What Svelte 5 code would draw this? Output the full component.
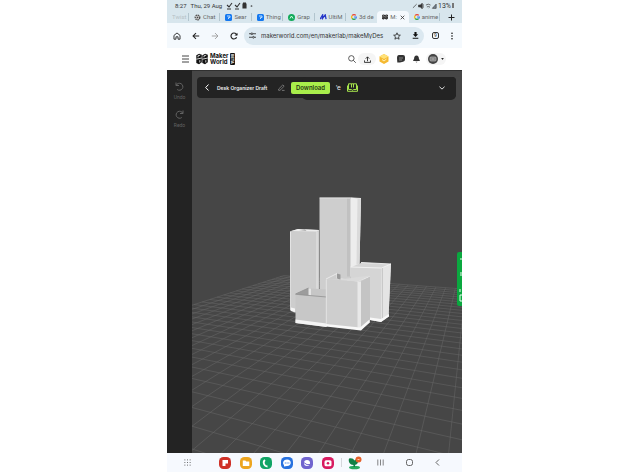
<script>
  const tabs = [
    { label: 'Twist', icon: '' },
    { label: 'Chat', icon: 'gear' },
    { label: 'Sear', icon: 'blue' },
    { label: 'Thing', icon: 'blue' },
    { label: 'Grap', icon: 'green' },
    { label: 'UltiM', icon: 'm' },
    { label: '3d de', icon: 'g' },
    { label: 'M:', icon: 'maker', active: true },
    { label: 'anime', icon: 'g' }
  ];
  const apps = [
    ['Flipboard', '#cf3128'],
    ['My Files', '#eda51f'],
    ['Phone', '#10a465'],
    ['Messages', '#2771df'],
    ['Internet', '#7064cf'],
    ['Camera', '#d81b60']
  ];

  // Floor grid in two-point perspective
  const va = { x: 473, y: 214 };
  const vb = { x: -530, y: 214 };
  const baseY = 452;
  const cross = (p, q, r, s) => {
    const d = (p.x - q.x) * (r.y - s.y) - (p.y - q.y) * (r.x - s.x);
    const a = p.x * q.y - p.y * q.x;
    const b = r.x * s.y - r.y * s.x;
    return {
      x: (a * (r.x - s.x) - (p.x - q.x) * b) / d,
      y: (a * (r.y - s.y) - (p.y - q.y) * b) / d
    };
  };
  const aPoint = (n) => ({ x: 448.7 - n * 32.4, y: baseY });
  const bPoint = (k) => ({ x: 192, y: 214 + 1 / (0.004724 + k * 0.000458) });
  const farA = aPoint(22);
  const farB = bPoint(30);
  const lines = [];
  for (let n = 0; n <= 22; n++) {
    const p = aPoint(n);
    const far = cross(va, p, vb, farB);
    lines.push([far, { x: p.x + (p.x - far.x), y: p.y + (p.y - far.y) }]);
  }
  for (let k = -4; k <= 30; k++) {
    const p = bPoint(k);
    const start = cross(va, farA, vb, p);
    const slope = (p.y - vb.y) / (p.x - vb.x);
    lines.push([start, { x: 900, y: vb.y + slope * (900 - vb.x) }]);
  }
</script>

{#snippet google()}
  <svg viewBox="0 0 10 10" width="6" height="6"><g fill="none" stroke-width="2"><path d="M8 2.3A4 4 0 0 0 2 2.5" stroke="#ea4335"/><path d="M2 2.5a4 4 0 0 0 0 5" stroke="#fbbc05"/><path d="M2 7.5a4 4 0 0 0 5.5.5" stroke="#34a853"/><path d="M5 5h4a4 4 0 0 1-1.5 3" stroke="#4285f4"/></g></svg>
{/snippet}

{#snippet makerMark(size)}
  <svg viewBox="0 0 12 12" width={size} height={size}><path d="M.3 2.200 3.200.8l2.600 1v7.500l-2.800 1.900L.3 10zM6.300 2.200 9.200.8l2.600 1v7.500L9 11.200 6.300 10z" fill="#111"/><path d="M.3 6.200 5.800 5M6.300 6.200 11.800 5M2 4.300V2.800l2.200-.6M8 4.300V2.800l2.200-.6M3.800 7.200v2.300M9.800 7.200v2.300" fill="none" stroke="#fff" stroke-width=".8"/></svg>
{/snippet}

<div class="page">
  <div class="device">
    <div class="status">
      <span>8:27</span><span class="date">Thu, 29 Aug</span>
      <svg viewBox="0 0 28 8" width="28" height="8" fill="none" stroke="#333" stroke-width="1.1"><path d="M1 3l2 2 3-4M1 7h4M9 3l2 2 3-4M9 7h4"/><path d="M17 2h3v4h-3zM17 1h3" fill="#333"/><circle cx="25.500" cy="4" r=".3"/></svg>
      <span class="right">
        <svg viewBox="0 0 28 8" width="26" height="8" fill="none" stroke="#444" stroke-width=".8"><path d="M1 6l4-4"/><path d="M7 3h2l2-2v6L9 5H7zM12 2v4" fill="#333"/><path d="M15 3q2.500-2 5 0M16 5q2-1 3 0l-1 1"/><path d="M22 6.500h4V2z" fill="#789"/></svg>
        <span class="percent">13%</span><i class="battery"></i>
      </span>
    </div>

    <nav class="tabs" aria-label="Browser tabs">
      {#each tabs as tab}
        <button class="tab" class:active={tab.active}>
          {#if tab.icon === 'g'}{@render google()}
          {:else if tab.icon === 'maker'}{@render makerMark(6)}
          {:else if tab.icon === 'm'}<svg viewBox="0 0 8 7" width="7" height="6"><path d="M0 6 3 1v4l3-4 1 5M3 5l-1 1" fill="none" stroke="#2637c8" stroke-width="1.500"/></svg>
          {:else if tab.icon === 'blue'}<svg viewBox="0 0 7 7" width="7" height="7"><rect width="7" height="7" rx="1.500" fill="#1478f0"/><path d="M2 2h3v1.500H3.500V5" fill="none" stroke="#b9dcff"/></svg>
          {:else if tab.icon === 'green'}<svg viewBox="0 0 7 7" width="7" height="7"><circle cx="3.500" cy="3.500" r="3.500" fill="#12aa5a"/><path d="M2 4.500 3.500 2 5 4.500" fill="none" stroke="#d5ffe6"/></svg>
          {:else if tab.icon === 'gear'}<svg viewBox="0 0 7 7" width="7" height="7"><circle cx="3.500" cy="3.500" r="2.200" fill="#fff" stroke="#555" stroke-width="1.500" stroke-dasharray="1.400 .5"/><circle cx="3.500" cy="3.500" r="1" fill="#444"/></svg>{/if}
          <span class="label">{tab.label}</span>
          {#if tab.active}<svg class="close" viewBox="0 0 5 5" width="5" height="5"><path d="m.7.7 3.600 3.600m0-3.600L.7 4.300" stroke="#333" stroke-width=".8"/></svg>{/if}
        </button>
      {/each}
      <button class="new" aria-label="New tab"><svg viewBox="0 0 7 7" width="7" height="7"><path d="M3.500.5v6M.5 3.500h6" stroke="#222"/></svg></button>
    </nav>

    <div class="address">
      <button aria-label="Home"><svg viewBox="0 0 10 10" width="8" height="8"><path d="M1.200 4.300 5 1.200l3.800 3.100V9H6.300V6H3.700v3H1.200z" fill="none" stroke="#222" stroke-width="1.100"/></svg></button>
      <button aria-label="Back"><svg viewBox="0 0 10 10" width="8" height="8"><path d="M9 5H1.500M5 1.300 1.300 5 5 8.700" fill="none" stroke="#222" stroke-width="1.300"/></svg></button>
      <button aria-label="Forward"><svg viewBox="0 0 10 10" width="8" height="8"><path d="M1 5h7.500M5 1.300 8.700 5 5 8.700" fill="none" stroke="#999" stroke-width="1.100"/></svg></button>
      <button aria-label="Reload"><svg viewBox="0 0 10 10" width="8" height="8"><path d="M8.300 6.500A3.700 3.700 0 1 1 7.700 2.500L9 4" fill="none" stroke="#222" stroke-width="1.400"/><path d="M9.300.8v3.700H5.600z" fill="#222"/></svg></button>
      <div class="omnibox">
        <svg viewBox="0 0 8 8" width="7" height="7" fill="none" stroke="#333"><path d="M0 2h2.500M4.500 2H8M0 6h3.500M6 6h2"/><circle cx="3.300" cy="2" r="1"/><circle cx="5" cy="6" r="1"/></svg>
        <input aria-label="Address" value="makerworld.com/en/makerlab/makeMyDes" />
        <button aria-label="Bookmark"><svg viewBox="0 0 10 10" width="8" height="8"><path d="m5 1 1.200 2.800 3 .2-2.300 2 .7 3L5 7.400 2.400 9l.7-3L.8 4l3-.2z" fill="none" stroke="#222"/></svg></button>
        <button aria-label="Downloads"><svg viewBox="0 0 8 8" width="7" height="7"><path d="M2.800 0h2.400v2.700H7L4 5.800 1 2.700h1.800zM.8 6.500h6.400v1.200H.8z" fill="#111"/></svg></button>
      </div>
      <button aria-label="Open tabs" class="count"><span>9</span></button>
      <button aria-label="Menu"><svg viewBox="0 0 4 8" width="4" height="8" fill="#111"><circle cx="2" cy="1.200" r=".8"/><circle cx="2" cy="4" r=".8"/><circle cx="2" cy="6.800" r=".8"/></svg></button>
    </div>

    <header class="site">
      <button aria-label="Navigation"><svg viewBox="0 0 7 8" width="7" height="8"><path d="M0 1h7M0 4h7M0 7h7" stroke="#444"/></svg></button>
      <a class="brand" href="#home">{@render makerMark(12)}<span class="name"><span>Maker</span><span>World</span></span><span class="beta">BETA</span></a>
      <div class="tools">
        <button aria-label="Search"><svg viewBox="0 0 10 10" width="8" height="8" fill="none" stroke="#333"><circle cx="4.200" cy="4.200" r="3.400"/><path d="m6.700 6.700 3 3"/></svg></button>
        <button class="pill upload" aria-label="Upload"><svg viewBox="0 0 8 8" width="7" height="7" fill="none" stroke="#222"><path d="M4 6V1M2 3l2-2 2 2M.5 5v2.300h7V5"/></svg></button>
        <button aria-label="Rewards"><svg viewBox="0 0 10 10" width="10" height="10"><path d="m5 0 4.500 2.500v5L5 10 .5 7.500v-5z" fill="#f5b931"/><path d="M5 0 .5 2.500 5 5l4.500-2.500z" fill="#ffe178"/><path d="M3 5.500 5 7l2.500-2" fill="none" stroke="#fff1b8"/></svg></button>
        <button aria-label="Messages"><svg viewBox="0 0 8 8" width="8" height="8"><path d="M2 0h4q2 0 2 2v2.500q0 2-2 2.300L3 7.500H.3L0 3q0-3 2-3z" fill="#333"/><path d="M2 3h4M2 5h3" stroke="#aaa" stroke-width=".7"/></svg></button>
        <button aria-label="Notifications"><svg viewBox="0 0 8 8" width="7" height="8"><path d="M4 0c2 0 2.700 1.500 2.700 3.500L8 6.300H0l1.300-2.800C1.300 1.500 2 0 4 0zM2.800 7h2.400L4 8z" fill="#333"/></svg></button>
        <button class="pill account" aria-label="Account"><svg viewBox="0 0 10 10" width="10" height="10"><circle cx="5" cy="5" r="5" fill="#444"/><rect x="2" y="3" width="6" height="4" rx="1" fill="#777" stroke="#ccc" stroke-width=".6"/><path d="M3.500 5h3" stroke="#ddd" stroke-width=".7"/></svg><svg viewBox="0 0 4 3" width="3" height="2"><path d="M0 0h4L2 3z" fill="#222"/></svg></button>
      </div>
    </header>

    <main>
      <aside>
        <button><svg viewBox="0 0 9 9" width="9" height="9"><path d="M1 .5v3h3M1.200 3.300a3.500 3.500 0 1 1 1 4.200" fill="none" stroke="currentColor"/></svg>Undo</button>
        <button><svg viewBox="0 0 9 9" width="9" height="9"><path d="M8 .5v3H5M7.800 3.300a3.500 3.500 0 1 0-1 4.200" fill="none" stroke="currentColor"/></svg>Redo</button>
      </aside>
      <section class="stage">
        <svg class="scene" viewBox="192 70 270 383" preserveAspectRatio="xMidYMid slice" role="img" aria-label="Desk organizer model">
          <g stroke="#686868" stroke-width=".7" stroke-opacity=".75">
            {#each lines as [p, q]}<line x1={p.x} y1={p.y} x2={q.x} y2={q.y} />{/each}
          </g>
          <path d="m290 231 8-2.500 21 1V312h-25l-3.500-2.500z" fill="#cdcdcd"/>
          <path d="m291 230.500 7-2 21 1-2.500 1.500z" fill="#ededed"/><path d="m299 229.500 6-.8 1.500 1.800z" fill="#aaa"/>
          <path d="M290.500 231v79" stroke="#ececec" stroke-width=".8"/><path d="M317 231v58" stroke="#eee" stroke-width=".8"/>
          <path d="m291 307 4 1v3.500l-4-1z" fill="#f4f4f4"/>
          <path d="M319.500 197.500h31V300h-31z" fill="#cecece"/>
          <path d="M347 198h4v78h-4z" fill="#c1c1c1"/>
          <path d="m350.500 197.300 10.500.7-1.500 68-9 12z" fill="#ededed"/>
          <path d="m357.500 198.500 3.500-.5-1.500 65-3 1z" fill="#dadada"/>
          <path d="M319.500 197.300h31l10.500.7" fill="none" stroke="#f3f3f3" stroke-width=".8"/>
          <path d="m350.500 267 11.500-5 29 1.500-2.500 52.500-7.500 5.500-11-2-19.500-40z" fill="#d5d5d5"/>
          <path d="m381.500 268 9.500-4.500-2.500 52.500-7.500 4z" fill="#e4e4e4"/>
          <path d="M382.500 267v53" stroke="#bbb" stroke-width=".7"/><path d="m361 262 30 1.500-9.500 4-31-1" fill="none" stroke="#f3f3f3" stroke-width=".9"/>
          <path d="m370 317 11 1.500 8-5v2.500l-8 5.500-11-2z" fill="#f8f8f8"/>
          <path d="m295.500 293.500 13-6 2 1V297z" fill="#9c9c9c"/><path d="m308.500 287.500 3 1v7l-3-.5z" fill="#e4e4e4"/>
          <path d="m311 288 16 1v9l-16-2z" fill="#c6c6c6"/>
          <path d="m295.500 294 31 2.500v30l-31-4z" fill="#c7c7c7"/>
          <path d="m295.500 293.500 13-6m-13 6.300 31 2.700" fill="none" stroke="#909090" stroke-width=".8"/>
          <path d="m295.500 319 31 4v3.500l-31-4z" fill="#f4f4f4"/>
          <path d="m326 278.500 11-5.500 3 2v4l18 2 12-5v44l-9 9-35-4z" fill="#cecece"/>
          <path d="m326 278.500 11-5.500v5l21 2.500 12-4.500" fill="none" stroke="#f0f0f0" stroke-width=".8"/>
          <path d="m337 273 3.500 1v5.500l-3.500-1.500z" fill="#9a9a9a"/><path d="m340 279 30-4-12 6-32-2.500z" fill="#dadada"/>
          <path d="M357.500 281h3.500v48h-3.500z" fill="#e8e8e8"/><path d="m361 281 9-5v46l-9 7z" fill="#c4c4c4"/>
          <path d="M326.300 279v46" stroke="#eee" stroke-width=".7"/>
          <path d="m326 323.500 34 3.500 9.500-8v3l-8.500 8-35-4z" fill="#f8f8f8"/>
        </svg>

        <div class="toolbar">
          <button class="back" aria-label="Go back"><svg viewBox="0 0 4 7" width="4" height="7"><path d="M3.500.5.700 3.500l2.800 3" fill="none" stroke="#fff"/></svg></button>
          <span class="title">Desk Organizer Draft</span>
          <button class="edit" aria-label="Rename"><svg viewBox="0 0 8 8" width="7" height="7" fill="none" stroke="#888" stroke-width=".9"><path d="M.7 5.800 5.500 1l1.500 1.500-4.700 4.700H.7zM4.500 7.300h3"/></svg></button>
          <button class="download">Download</button>
          <span class="clip">'e</span>
          <button class="guide" aria-label="Guide"><svg viewBox="0 0 11 9" width="11" height="9" fill="none" stroke="#a5e34b"><path d="M1.500.8h8v5.700H6.500l-1 .8-1-.8h-3zM4.500 1v3.500M6.500 1v3.500M.5 2.500V8.300h10V2.500"/></svg></button>
          <button class="expand" aria-label="Expand"><svg viewBox="0 0 7 4" width="6" height="4"><path d="m.5.500 3 2.800 3-2.800" fill="none" stroke="#fff"/></svg></button>
        </div>
        <button class="feedback" aria-label="Feedback"><svg viewBox="0 0 5 54" width="5" height="54" fill="none" stroke="#e7ffef"><path d="M3 7h2M3 21h2M3 23h2M3 37v3M5 43H3v6h2"/></svg></button>
      </section>
    </main>

    <footer>
      <button aria-label="All apps"><svg viewBox="0 0 8 8" width="7" height="7"><path d="M.5 1h7M.5 4h7M.5 7h7" stroke="#444" stroke-dasharray="1 2"/></svg></button>
      <div class="apps">
        {#each apps as [name, color], i}
          <button aria-label={name}>
            <svg viewBox="0 0 12 12" width="12" height="12"><rect width="12" height="12" rx="4.500" fill={color}/>
              {#if i === 0}<path d="M3.500 3h5.500v3.500H6.500V9h-3z" fill="#fff"/>
              {:else if i === 1}<path d="M2.800 3.500h2.500l1 1h3v4.500H2.800z" fill="#fff"/>
              {:else if i === 2}<path d="M5 3Q3 4.500 4 7t3.500 2.500" fill="none" stroke="#fff" stroke-width="1.800"/>
              {:else if i === 3}<path d="M6 2.500c5 0 5 6.500 0 6.500L3 9.500V8C1 6 2.500 2.500 6 2.500z" fill="#fff"/><path d="M3.800 6h4.500" stroke="#2771df" stroke-dasharray="1 .8"/>
              {:else if i === 4}<circle cx="6" cy="6" r="3" fill="#fff"/><path d="M2 5q4 4 8 2.500" fill="none" stroke="#7064cf"/>
              {:else}<rect x="2.500" y="3.200" width="7" height="6" rx="1.500" fill="#fff"/><circle cx="6" cy="6.200" r="1.300" fill="#d81b60"/>{/if}
            </svg>
          </button>
        {/each}
      </div>
      <i class="rule"></i>
      <button class="recent" aria-label="Recent app"><svg viewBox="0 0 14 14" width="14" height="14"><ellipse cx="6.500" cy="11.500" rx="5.500" ry="1.800" fill="#27aa5d"/><path d="M5.500 11V9C2 9 0 6 1 2.500q4-1 5.500 2Q7 3 10 3q1 5-3 6v2z" fill="#118044"/><circle cx="10.500" cy="3.500" r="3" fill="#e5602a"/><path d="M9.500 3.500h2" stroke="#ffc9a8"/></svg></button>
      <div class="keys">
        <button aria-label="Recents"><svg viewBox="0 0 7 7" width="7" height="7"><path d="M.8.5v6M3.500.5v6M6.200.5v6" stroke="#666" stroke-width=".8"/></svg></button>
        <button aria-label="Home screen"><svg viewBox="0 0 7 7" width="7" height="7"><rect x=".5" y=".5" width="6" height="6" rx="2" fill="none" stroke="#555" stroke-width=".9"/></svg></button>
        <button aria-label="System back"><svg viewBox="0 0 5 7" width="5" height="7"><path d="M4 .5 1 3.500l3 3" fill="none" stroke="#555" stroke-width=".9"/></svg></button>
      </div>
    </footer>
  </div>
</div>

<style>
  :global(body) { margin: 0; background: #fff; }
  .page { padding: 0 166px 0 167px; font-family: Roboto, sans-serif; color: #222; }
  .device { display: flex; flex-direction: column; height: 100vh; overflow: hidden; }
  button { appearance: none; border: 0; padding: 0; margin: 0; background: none; font: inherit; color: inherit; display: flex; align-items: center; justify-content: center; }
  svg { display: block; flex: none; }
  .status { flex: none; height: 11px; padding: 0 8px; display: flex; align-items: center; background: #d8e6ed; font-size: 6px; line-height: 8px; color: #333; }
  .date { margin: 0 4px 0 4px; }
  .right { margin-left: auto; display: flex; align-items: center; }
  .percent { font-size: 7px; line-height: 8px; }
  .battery { width: 2px; height: 5px; margin-left: 1px; background: #777; }
  .tabs { flex: none; height: 12px; display: grid; grid-template-columns: 22px repeat(8, minmax(0, 1fr)) 22px; background: #d8e6ed; font-size: 6px; line-height: 8px; }
  .tab { position: relative; min-width: 0; gap: 2px; padding: 0 0 0 5px; justify-content: flex-start; color: #666; }
  .tab:not(.active)::after { content: ''; position: absolute; right: 0; top: 2px; height: 8px; border-right: 1px solid #b2c5ce; }
  .tab:nth-child(7)::after { display: none; }
  .label { white-space: nowrap; }
  .tab:first-child .label { opacity: .3; }
  .tab.active { background: #f4f9fd; border-radius: 4px 4px 0 0; }
  .close { margin: 0 4px 0 auto; }
  .address { flex: none; height: 25px; display: flex; align-items: center; gap: 11px; padding: 0 8px 0 6px; background: #f4f9fd; }
  .omnibox { flex: 1; min-width: 0; height: 18px; margin: 0 -3px 0 -5px; padding: 0 5px; border-radius: 9px; background: #dbe8f0; display: flex; align-items: center; gap: 5px; }
  input { flex: 1; min-width: 0; width: 0; height: 14px; padding: 0; border: 0; outline: 0; background: none; font: 6px/10px Inter, sans-serif; color: #333; }
  .omnibox button + button { margin-left: 6px; }
  .count { width: 7px; height: 7px; box-sizing: border-box; border: 1px solid #333; border-radius: 2px; font-size: 5px; line-height: 5px; }
  .site { flex: none; height: 22px; display: flex; align-items: center; padding: 0 16px 0 15px; background: #fff; }
  .brand { display: flex; align-items: center; gap: 2px; margin-left: 7px; color: #111; text-decoration: none; }
  .name { display: flex; flex-direction: column; font: 700 6px/6px Inter, sans-serif; }
  .beta { writing-mode: vertical-rl; background: #111; color: #fff; font-size: 4px; line-height: 5px; font-weight: 700; padding: 1px 0; border-radius: 1px; }
  .tools { display: flex; align-items: center; gap: 8px; margin-left: auto; }
  .pill { width: 18px; height: 12px; border-radius: 6px; background: #f5f5f5; }
  .upload { margin: 0 -5px 0 -6px; }
  .account { gap: 3px; margin-left: -2px; width: 20px; }
  main { flex: 1; min-height: 0; display: flex; background: #464646; }
  aside { flex: none; width: 25px; background: #232323; color: #626262; display: flex; flex-direction: column; align-items: center; gap: 10px; padding-top: 12px; font-size: 5px; line-height: 6px; }
  aside button { flex-direction: column; gap: 3px; }
  .stage { position: relative; flex: 1; min-width: 0; overflow: hidden; border-top: 1px solid #303030; box-sizing: border-box; }
  .scene { width: 100%; height: 100%; }
  .toolbar { position: absolute; left: 5px; right: 6px; top: 6px; height: 21px; display: flex; align-items: center; background: #232323; border-radius: 4px; color: #eee; }
  .toolbar::before { content: ''; position: absolute; left: 105px; right: 0; top: 0; height: 23px; background: #232323; border-radius: 4px 4px 5px 5px; }
  .toolbar > * { position: relative; }
  .back { margin-left: 8px; }
  .title { margin-left: 8px; font: 600 5px/8px Inter, sans-serif; white-space: nowrap; }
  .edit { margin-left: auto; }
  .download { width: 39px; height: 12px; margin-left: 6px; border-radius: 2px; background: #a9ee4b; color: #253514; font: 600 6px/8px Inter, sans-serif; }
  .clip { width: 8px; margin-left: 6px; font-size: 7px; line-height: 8px; }
  .guide { margin-left: 3px; }
  .expand { margin: 0 11px 0 81px; }
  .feedback { position: absolute; right: 0; top: 181px; width: 5px; height: 54px; border-radius: 2px 0 0 2px; background: #0aa83f; }
  footer { flex: none; height: 19px; display: flex; align-items: center; padding: 0 22px 0 17px; background: #f6f9fe; }
  .apps { display: flex; flex: 115; justify-content: space-between; margin-left: 28px; }
  .rule { width: 1px; height: 9px; margin: 0 6px 0 7px; background: #d4d7dc; }
  .keys { display: flex; flex: 63; justify-content: space-between; margin-left: 15px; }
</style>
